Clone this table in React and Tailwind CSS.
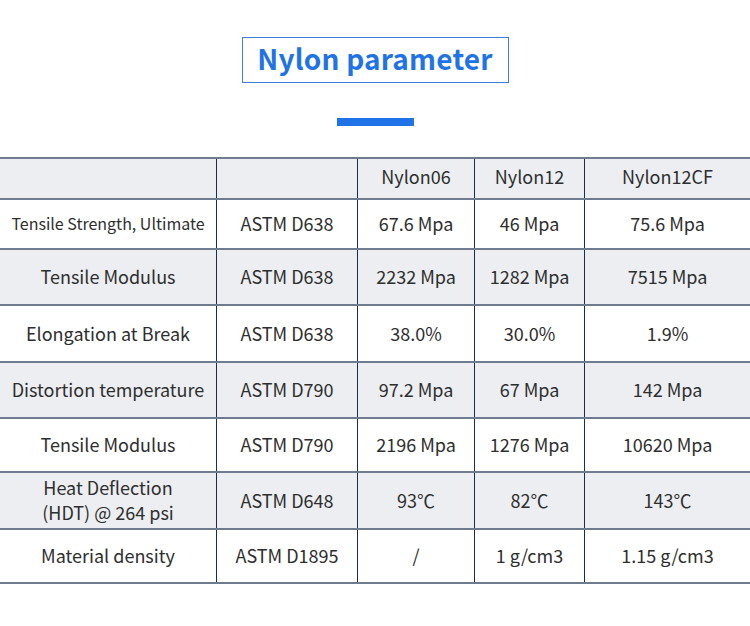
import React from "react";

const cols = ["w-[217px]", "w-[141px]", "w-[117px]", "w-[110px]", "flex-1"];

const rows = [
  { h: "h-[41px]", bg: "bg-[#eceef2]", cells: ["", "", "Nylon06", "Nylon12", "Nylon12CF"], head: true },
  { h: "h-[50px]", bg: "bg-white", cells: ["Tensile Strength, Ultimate", "ASTM D638", "67.6 Mpa", "46 Mpa", "75.6 Mpa"], small: true },
  { h: "h-[56px]", bg: "bg-[#eceef2]", cells: ["Tensile Modulus", "ASTM D638", "2232 Mpa", "1282 Mpa", "7515 Mpa"] },
  { h: "h-[57px]", bg: "bg-white", cells: ["Elongation at Break", "ASTM D638", "38.0%", "30.0%", "1.9%"] },
  { h: "h-[56px]", bg: "bg-[#eceef2]", cells: ["Distortion temperature", "ASTM D790", "97.2 Mpa", "67 Mpa", "142 Mpa"] },
  { h: "h-[54px]", bg: "bg-white", cells: ["Tensile Modulus", "ASTM D790", "2196 Mpa", "1276 Mpa", "10620 Mpa"] },
  { h: "h-[57px]", bg: "bg-[#eceef2]", cells: ["Heat Deflection\n(HDT) @ 264 psi", "ASTM D648", "93℃", "82℃", "143℃"] },
  { h: "h-[54px]", bg: "bg-white", cells: ["Material density", "ASTM D1895", "/", "1 g/cm3", "1.15 g/cm3"] },
];

export default function App() {
  return (
    <div
      className="w-[750px] h-[626px] bg-white overflow-hidden"
      style={{ fontFamily: '"Noto Sans CJK SC", "Noto Sans", sans-serif' }}
    >
      <div className="flex flex-col items-center pt-[37px]">
        <div className="w-[267px] h-[46px] border border-[#3b82d6] flex items-center justify-center pb-[5px]">
          <span className="text-[28px] font-bold text-[#1f73e6] leading-none tracking-[0.2px]">
            Nylon parameter
          </span>
        </div>
        <div className="mt-[35px] w-[77px] h-[8px] bg-[#1f73e6]" />
      </div>
      <div className="mt-[31px] border-t-2 border-[#6f7c90]">
        {rows.map((r, i) => (
          <div key={i} className={`flex ${r.h} ${r.bg} border-b-2 border-[#6f7c90]`}>
            {r.cells.map((c, j) => (
              <div
                key={j}
                className={`${cols[j]} ${j < 4 ? "border-r-[1.5px] border-[#1b2d4a]" : ""} flex items-center justify-center text-center text-[#2e2e2e] whitespace-pre-line leading-[25px] ${
                  r.small && j === 0 ? "text-[16px]" : "text-[18px]"
                } ${r.head ? "pb-[4px]" : "pb-[1px]"}`}
              >
                {c}
              </div>
            ))}
          </div>
        ))}
      </div>
    </div>
  );
}
